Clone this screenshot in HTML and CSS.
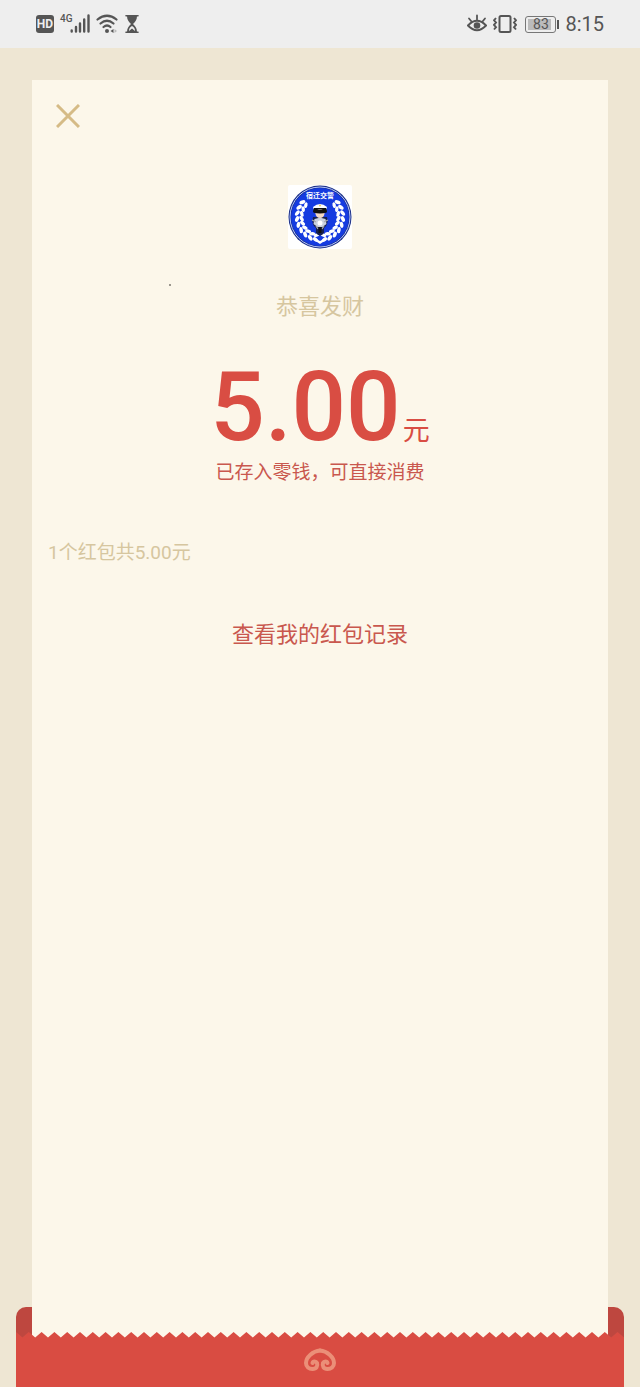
FILE: index.html
```html
<!DOCTYPE html>
<html lang="zh-CN">
<head>
    <meta charset="UTF-8">
    <meta name="viewport" content="width=device-width, initial-scale=1">
    <title>红包详情</title>
    <link rel="stylesheet" href="styles.css">
</head>
<body>
    <header class="status-bar">
        <div class="status-left">
            <span class="hd">HD</span>
            <span class="network">4G</span>
            <svg class="signal" width="20" height="20" viewBox="0 0 20 20">
                <path d="M1.7 16.5v1M6 13v4.5M10 9.5v8M14.2 5.5v12M18.5 1.5v16" stroke="#555" stroke-width="2.4" stroke-linecap="round"/>
            </svg>
            <svg class="wifi" width="22" height="20" viewBox="0 0 22 20">
                <g fill="none" stroke="#555" stroke-width="2.2" stroke-linecap="round">
                    <path d="M1.5 5.5Q11 -2 20.5 5.5"/>
                    <path d="M4.5 9.5Q11 4 17.5 9.5"/>
                    <path d="M7.5 13Q11 10 14.5 13"/>
                </g>
                <circle cx="11" cy="17" r="2" fill="#555"/>
                <path d="M14.5 17l3-2v4z" fill="#555"/>
                <path d="M18.5 15l2.5 2-2.5 2z" fill="#bbb"/>
            </svg>
            <svg class="hourglass" width="14" height="20" viewBox="0 0 14 20">
                <path d="M1 1.8h12M1 18.2h12" stroke="#555" stroke-width="1.6" stroke-linecap="round"/>
                <path d="M2 2h10c0 4-2 6-4 8 2 2 4 4 4 8H2c0-4 2-6 4-8C4 8 2 6 2 2z" fill="#555"/>
                <path d="M4 17c0-3 1.5-4 3-5 1.5 1 3 2 3 5l-3-2.5z" fill="#eee"/>
            </svg>
        </div>
        <div class="status-right">
            <svg width="20" height="20" viewBox="0 0 20 20">
                <path d="M1 11.5Q10 2 19 11.5Q10 21 1 11.5z" fill="none" stroke="#555" stroke-width="2"/>
                <circle cx="10" cy="11.5" r="3.3" fill="#555"/>
                <path d="M10 1.5v4M2 4.5l2.5 3M18 4.5l-2.5 3" stroke="#555" stroke-width="1.8" stroke-linecap="round"/>
            </svg>
            <svg class="vibrate" width="24" height="20" viewBox="0 0 24 20">
                <rect x="6.5" y="2" width="11" height="16" rx="1.5" fill="none" stroke="#555" stroke-width="2"/>
                <path d="M3 4L1 6.3 3 8.6 1 10.9 3 13.2 1 15.5M21 4l2 2.3-2 2.3 2 2.3-2 2.3 2 2.3" fill="none" stroke="#555" stroke-width="1.9"/>
            </svg>
            <span class="battery"><span class="battery-level">83</span></span>
            <span class="time">8:15</span>
        </div>
    </header>

    <main class="envelope">
        <section class="sheet">
            <button type="button" class="close" aria-label="关闭">
                <svg width="24" height="24" viewBox="0 0 24 24">
                    <path d="M1 1l22 22M23 1L1 23" stroke="#d5bb86" stroke-width="3"/>
                </svg>
            </button>

            <svg class="avatar" width="64" height="64" viewBox="0 0 64 64">
                <defs>
                    <g id="leaf">
                        <ellipse cx="9" cy="32" rx="1.8" ry="3.1" transform="rotate(28 9 32)"/>
                        <ellipse cx="13.5" cy="32" rx="1.7" ry="3" transform="rotate(-28 13.5 32)"/>
                    </g>
                    <g id="laurel" fill="#fff">
                        <use href="#leaf" transform="rotate(40 32 32)"/>
                        <use href="#leaf" transform="rotate(25 32 32)"/>
                        <use href="#leaf" transform="rotate(10 32 32)"/>
                        <use href="#leaf" transform="rotate(-5 32 32)"/>
                        <use href="#leaf" transform="rotate(-20 32 32)"/>
                        <use href="#leaf" transform="rotate(-35 32 32)"/>
                        <use href="#leaf" transform="rotate(-50 32 32)"/>
                        <use href="#leaf" transform="rotate(-65 32 32)"/>
                        <use href="#leaf" transform="rotate(-79 32 32)"/>
                    </g>
                </defs>
                <rect width="64" height="64" rx="2" fill="#fff"/>
                <circle cx="32" cy="32" r="31.5" fill="#1b2f86"/>
                <circle cx="32" cy="32" r="30" fill="none" stroke="#b9c9ff" stroke-width="1"/>
                <circle cx="32" cy="32" r="29" fill="#153be0"/>
                <!-- laurel, mirrored -->
                <use href="#laurel"/>
                <use href="#laurel" transform="translate(64 0) scale(-1 1)"/>
                <text class="avatar-text" x="32" y="13" text-anchor="middle">宿迁交警</text>
                <!-- rider -->
                <path d="M25 32q-1.5 6 1 9l2 2v5q4 5 8 0v-5l2-2q2.5-3 1-9z" fill="#16204f"/>
                <path d="M25 22q7-6 14 0l-1 3H26z" fill="#fff"/>
                <path d="M26 23h12l1 4q-7 3-14 0z" fill="#111"/>
                <circle cx="32" cy="28.5" r="4.5" fill="#f4d9c4"/>
                <path d="M25.5 24.5h13v3q-6.5 2-13 0z" fill="#111"/>
                <circle cx="32" cy="20.5" r="1" fill="#e9ca62"/>
                <path d="M26.5 34l4-1h3l4 1 1 5-4 3h-5l-4-3z" fill="#cbd2df"/>
                <circle cx="32" cy="38" r="2.5" fill="#fff"/>
                <path d="M24 35l4 2M40 35l-4 2M28 41l2 3M36 41l-2 3" stroke="#aaa" stroke-width="1.3"/>
                <path d="M30.5 42h3v6h-3z" fill="#111"/>
                <path d="M28 54l4 2 4-2-1 3-3 2-3-2z" fill="#fff"/>
            </svg>

            <div class="sender"></div>
            <p class="wishes">恭喜发财</p>
            <p class="amount">5.00<span class="unit">元</span></p>
            <p class="tip">已存入零钱，可直接消费</p>
            <p class="summary">1个红包共5.00元</p>
            <a class="records" href="#">查看我的红包记录</a>
        </section>
    </main>

    <footer class="pocket">
        <svg class="teeth" width="100%" height="8">
            <defs>
                <pattern id="zigzag" width="64" height="8" patternUnits="userSpaceOnUse">
                    <path d="M0 1L6.4 6.5 12.8 1 19.2 6.5 25.6 1 32 6.5 38.4 1 44.8 6.5 51.2 1 57.6 6.5 64 1V8H0z" fill="#d94c42"/>
                </pattern>
            </defs>
            <rect width="100%" height="8" fill="url(#zigzag)"/>
        </svg>
        <div class="pocket-front">
            <svg width="32" height="24" viewBox="0 0 32 24">
                <g fill="none" stroke="#eb8f78" stroke-width="4" stroke-linecap="round">
                    <path d="M16 2.5C9 3 2 9 2 15c0 4 3 6 6.5 6 4 0 5.5-3 4.5-6-1-2-4-2-4.5 0"/>
                    <path d="M16 2.5C23 3 30 9 30 15c0 4-3 6-6.5 6-4 0-5.5-3-4.5-6 1-2 4-2 4.5 0"/>
                </g>
            </svg>
        </div>
    </footer>
</body>
</html>
```
FILE: styles.css
```css
* {
    box-sizing: border-box;
}

body {
    margin: 0;
    min-height: 100vh;
    display: flex;
    flex-direction: column;
    background-color: #eee6d3;
    font-family: Roboto, "Noto Sans CJK SC", sans-serif;
}

p {
    margin: 0;
}

svg {
    display: block;
}

.status-bar {
    display: flex;
    justify-content: space-between;
    align-items: center;
    height: 48px;
    padding: 0 36px;
    background-color: #eeeeee;
    color: #555;
}

.status-left,
.status-right {
    display: flex;
    align-items: center;
}

.hd {
    width: 18px;
    border-radius: 3px;
    background-color: #555;
    color: #eee;
    font-size: 12px;
    font-weight: 700;
    line-height: 18px;
    text-align: center;
}

.network {
    width: 10px;
    margin-left: 6px;
    padding-bottom: 10px;
    font-size: 10px;
    font-weight: 500;
    line-height: 12px;
}

.wifi,
.vibrate {
    margin-left: 6px;
}

.hourglass {
    margin-left: 7px;
}

.battery {
    display: flex;
    align-items: center;
    margin-left: 8px;
}

.battery::after {
    content: "";
    width: 2px;
    height: 9px;
    margin-left: 1px;
    background-color: #555;
}

.battery-level {
    width: 31px;
    border: 1px solid #777;
    border-radius: 3px;
    background: linear-gradient(#bbb, #bbb) 2px 2px / 23px 11px no-repeat;
    font-size: 14px;
    line-height: 15px;
    text-align: center;
}

.time {
    margin-left: 6px;
    font-size: 20px;
}

.envelope {
    flex: 1;
    display: flex;
    position: relative;
    padding: 32px 32px 0;
}

/* inside of the pocket, behind the sheet */
.envelope::before {
    content: "";
    position: absolute;
    left: 16px;
    right: 16px;
    bottom: -8px;
    height: 32px;
    border-radius: 10px 10px 0 0;
    background-color: #be473f;
}

.sheet {
    position: relative;
    flex: 1;
    display: flex;
    flex-direction: column;
    align-items: center;
    margin-bottom: -8px;
    padding: 24px 16px;
    background-color: #fcf7ea;
    color: #c9584e;
}

.close {
    align-self: flex-start;
    margin-left: 8px;
    padding: 0;
    border: none;
    background: none;
    cursor: pointer;
}

.avatar {
    margin-top: 57px;
}

.avatar-text {
    fill: #fff;
    font-size: 7px;
    font-weight: 700;
}

.sender {
    width: 302px;
    height: 2px;
    margin-top: 35px;
    background: linear-gradient(#9b978e, #9b978e) 0 0 / 2px 2px no-repeat;
}

.wishes {
    margin-top: 5px;
    color: #d6c69f;
    font-size: 22px;
    line-height: 32px;
}

.amount {
    margin-top: 32px;
    color: #d94d43;
    font-size: 96px;
    font-weight: 500;
    line-height: 104px;
}

.unit {
    margin-left: 2px;
    font-size: 27px;
    font-weight: 400;
    line-height: 32px;
}

.tip {
    font-size: 19px;
    line-height: 28px;
}

.summary {
    align-self: flex-start;
    margin-top: 52px;
    color: #d6c69f;
    font-size: 19px;
    line-height: 28px;
}

.records {
    margin-top: 52px;
    color: #c9584e;
    font-size: 22px;
    line-height: 32px;
    text-decoration: none;
}

.pocket {
    position: relative;
    margin: 0 16px;
}

.pocket-front {
    display: flex;
    justify-content: center;
    height: 48px;
    padding-top: 9px;
    background-color: #d94c42;
}
```
